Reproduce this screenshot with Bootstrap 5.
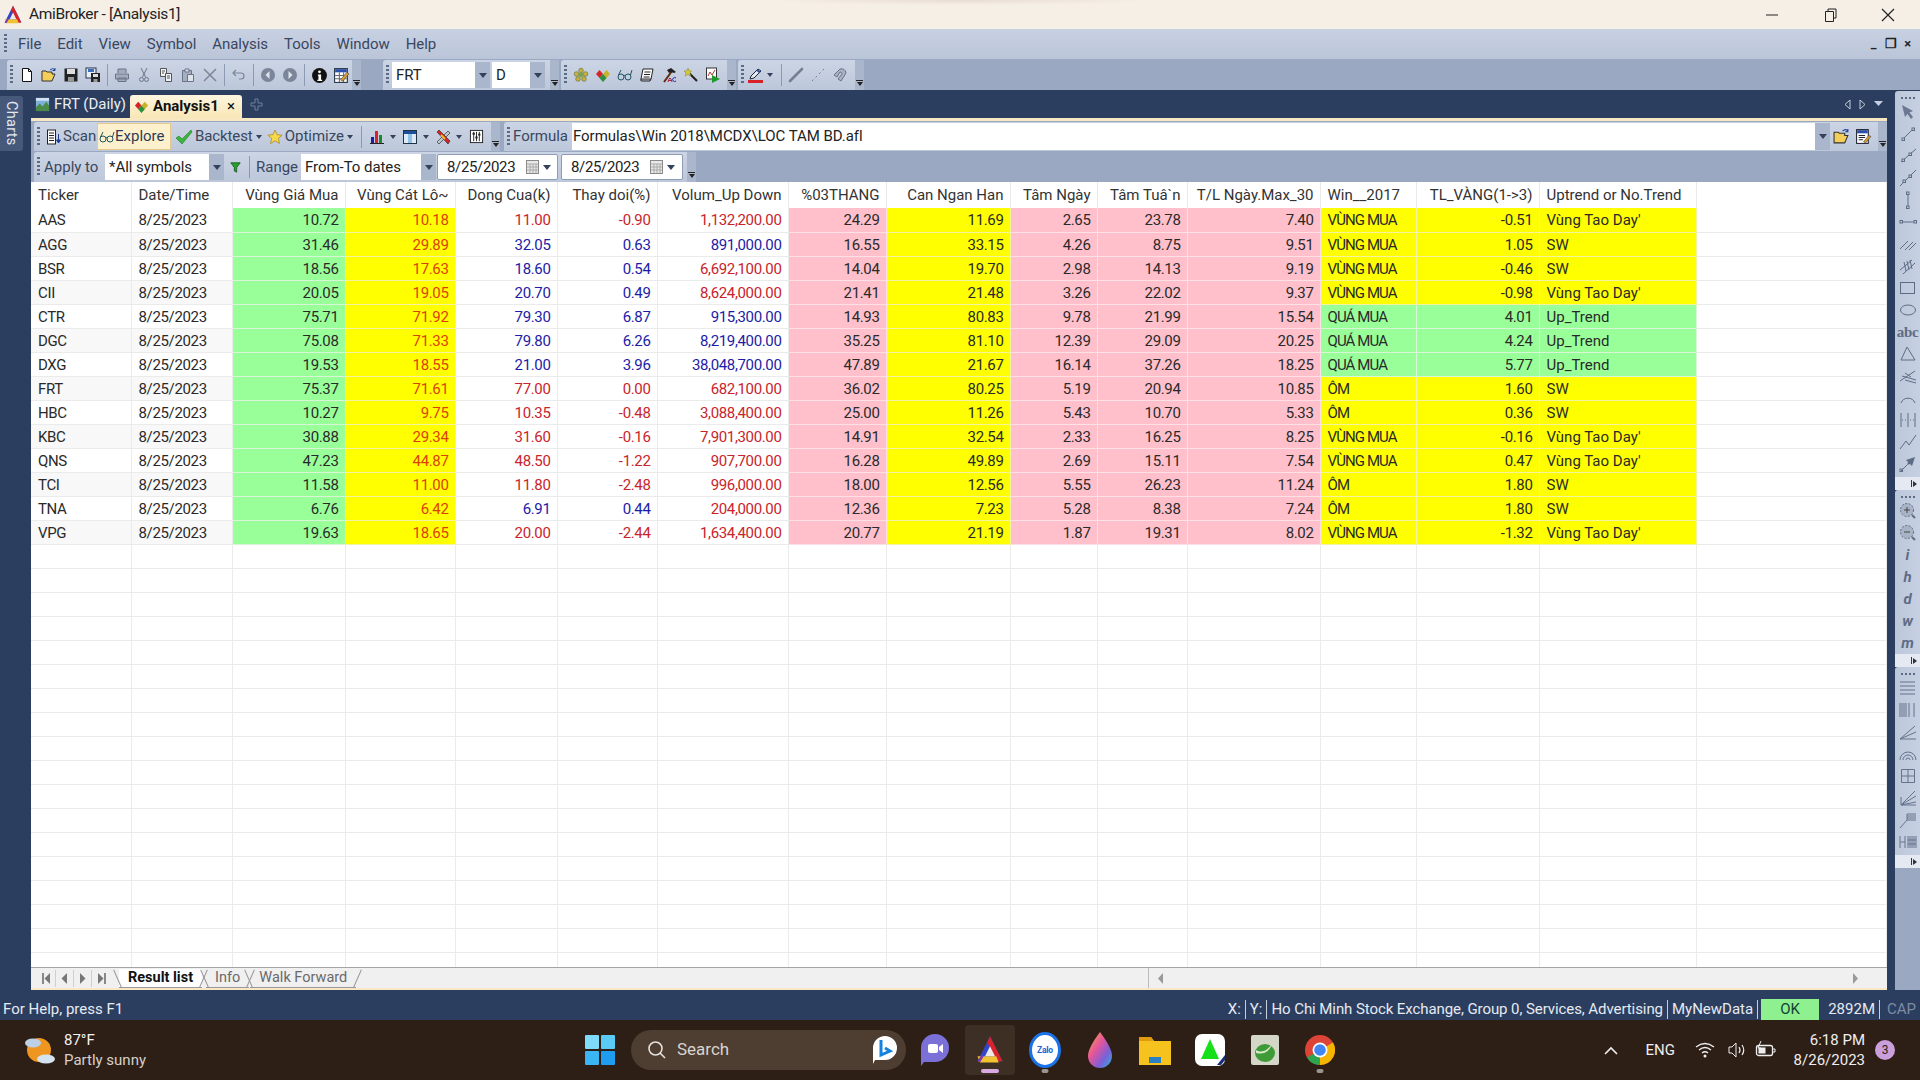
<!DOCTYPE html>
<html lang="en">
<head>
<meta charset="utf-8">
<title>AmiBroker - [Analysis1]</title>
<link href="https://cdn.jsdelivr.net/npm/bootstrap@5.3.0/dist/css/bootstrap.min.css" rel="stylesheet">
<script src="https://cdn.jsdelivr.net/npm/bootstrap@5.3.0/dist/js/bootstrap.bundle.min.js"></script>
<style>
html,body{height:100%}
body{width:1920px;height:1080px;overflow:hidden;background:#2c3e5f;font-family:Roboto,"Liberation Sans",sans-serif;font-size:15px;letter-spacing:-.35px;color:#222}
svg{display:block;flex:none}
.defs{width:0;height:0;position:absolute}
.titlebar{height:29px;background:radial-gradient(ellipse 190px 5px at 960px 0,#e9dcd2 0,#f5efe6 100%) #f5f0e8;flex:none;padding-left:3px}
.title-text{font-size:15.5px;color:#222;margin-left:6px}
.win-btn{width:58px;height:29px}
.win-set{margin-right:3px}
.menubar{height:30px;flex:none;background:linear-gradient(#c8d1e2,#bbc5d9);color:#39475f;padding-left:1px}
.menu-item{padding:0 8px;font-size:15px;letter-spacing:-.05px}
.grip{width:3px;height:20px;margin:0 3px;flex:none;background:repeating-linear-gradient(#5b6a85 0 2px,transparent 2px 4px)}
.mdi{width:17px;font-size:13px;text-align:center;color:#222;font-weight:700}
.toolrow{height:31px;flex:none;background:#9aa8c2;padding:1px 0 0 7px}
.bar{height:30px;background:linear-gradient(#ccd5e5,#bcc7da);border-radius:3px 3px 0 0;position:relative;flex:none}
.w-file{width:352px}
.w-sym{width:176px;margin-left:24px}
.w-ana{width:175px;margin-left:2px}
.w-draw{width:126px;margin-left:2px}
.w-run{width:466px}
.w-range{width:662px}
.slot{width:22px;height:28px;flex:none;display:flex;align-items:center;justify-content:center}
.slot.pull{margin-left:-2px}
.sep{width:1px;height:22px;background:#8c99b2;flex:none;margin:0 3px}
.sep.sep-six{margin:0 6px}
.over{width:9px;align-self:stretch;background:#aab6cc;margin-left:auto;flex:none;display:flex;flex-direction:column;justify-content:flex-end;align-items:center;padding-bottom:4px}
.over i{display:block;width:7px;height:1px;background:#222;margin-bottom:1px}
.over b{display:block;width:0;height:0;border:3px solid transparent;border-top:4px solid #222;border-bottom:0}
.combo{height:26px;background:#fff;display:flex;align-items:center;padding-left:4px;font-size:15px;flex:none;position:relative;color:#222;letter-spacing:-.05px}
.combo .drop{position:absolute;right:0;top:0;bottom:0;width:15px;background:#aab6cc;display:flex;align-items:center;justify-content:center}
.w-frt{width:98px}.w-d{width:53px;margin-left:2px}
.w-apply{width:119px}.w-from{width:135px}
.combo.c-tall{height:27px;padding-left:1px}
.tri{display:block;width:0;height:0;border:4px solid transparent;border-top:5px solid #33415c;border-bottom:0;flex:none}
.tri.sm{border-width:3px;border-top-width:4px;border-bottom-width:0}
.tri.gap{margin:0 6px 0 5px}
.tri.after-label{margin:0 5px 0 3px}
.body-row{height:900px;flex:none}
.side-left{width:31px;flex:none}
.charts-tab{width:23px;height:55px;margin-top:6px;background:#46597a;color:#e4e8f0;border-radius:0 3px 3px 0;writing-mode:vertical-rl;font-size:14.5px;letter-spacing:.3px;text-align:center;line-height:23px}
.center-col{width:1856px;flex:none}
.tabstrip{height:28px;flex:none;color:#e9edf4;font-size:15px;letter-spacing:0}
.doc-tab{margin-top:5px;height:23px;width:112px;background:linear-gradient(#fdf6e0,#f8e6b5);border-radius:3px 3px 0 0;color:#111;font-weight:700;flex:none;font-size:15px}
.ana{flex:1;min-height:0;background:#9aa8c2;border-top:3px solid #f7e7c2;border-bottom:2px solid #f7e7c2;display:flex;flex-direction:column;width:1856px}
.ana-row1{height:30px;flex:none;padding:1px 0 0 3px;gap:4px}
.ana-row2{height:31px;flex:none;padding:1px 0 0 3px}
.ana-row1 .bar{height:29px}
.ana-row2 .bar{height:30px}
.tb-label{color:#39475f;font-size:15px;white-space:nowrap;letter-spacing:0}
.scan-ico{margin-left:3px}
.scan-txt{margin-left:1px;width:34px}
.explore{background:#fdf1cd;border:1px solid #e4c88c;height:27px;width:74px;padding-left:1px;margin-right:4px;color:#2f3b55;flex:none}
.back-txt{margin-left:2px;letter-spacing:-.1px}
.opt-txt{margin-left:2px}
.mix-ico{margin-left:1px}
.apply-box{width:62px;padding-left:1px;flex:none}
.range-box{width:45px;flex:none}
.fn{margin:0 2px 0 6px}
.datebox{height:26px;background:#fff;border:1px solid #8f9cb5;border-radius:2px;padding-left:9px;flex:none;color:#222;font-size:15px}
.d1{width:121px;margin-left:1px}.d2{width:122px;margin-left:3px}
.cal-ico{margin-left:10px;margin-right:2px}
.grid-wrap{flex:1;min-height:0;overflow:hidden;background:#fff}
.quotes{table-layout:fixed;width:1856px;margin:0;font-size:15px}
.quotes>thead>tr>th{height:26px;padding:0 6px 0 7px;font-weight:400;color:#333;border:0;border-right:1px solid #e9e9e9;background:#fff;white-space:nowrap;vertical-align:middle;line-height:1;letter-spacing:0}
.quotes>tbody>tr>td{height:24px;padding:2px 6px 0 7px;border:0;border-right:1px solid #ebebeb;border-bottom:1px solid #ebebeb;color:#2a2a2a;white-space:nowrap;vertical-align:middle;line-height:1;background:#fff}
.quotes>tbody>tr:nth-child(even):nth-child(-n+14)>td:nth-child(-n+2){background:#f8f8f8}
.quotes>tbody>tr>td.cg{background:#99ff99;border-color:#d8f5d8}
.quotes>tbody>tr>td.cy{background:#ffff00;border-color:#f3f3a0}
.quotes>tbody>tr>td.cp{background:#ffc0cb;border-color:#fbe0e5}
.quotes>tbody>tr>td.tr{color:#c9242b;background:#fff}
.quotes>tbody>tr>td.tb{color:#1c1ca6;background:#fff}
.quotes>tbody>tr>td.to{color:#dc3f0a}
.quotes>tbody>tr>td:nth-child(13){letter-spacing:-.9px}
.quotes>tbody>tr>td:nth-child(15){letter-spacing:0}
.cw1{width:100px}.cw2{width:101px}.cw3{width:113px}.cw4{width:110px}.cw5{width:102px}.cw6{width:100px}.cw7{width:131px}.cw8{width:98px}.cw9{width:124px}.cw10{width:87px}.cw11{width:90px}.cw12{width:133px}.cw13{width:96px}.cw14{width:123px}.cw15{width:157px}
.sheetbar{height:21px;flex:none;background:#f0f0f0;border-top:1px solid #a5a5a5;color:#555;font-size:14.5px;padding-left:7px;letter-spacing:0}
.nav-cell{width:18px;height:17px;border-right:1px solid #cfcfcf}
.sheet-tab{padding:0 9px;height:19px;line-height:18px;border-bottom:1px solid #999;position:relative;margin-right:1px;color:#6a6a6a;white-space:nowrap}
.sheet-tab::before,.sheet-tab::after{content:"";position:absolute;top:0;bottom:-1px;width:1px;background:#999}
.sheet-tab::before{left:-2px;transform:rotate(-24deg)}
.sheet-tab::after{right:-2px;transform:rotate(24deg)}
.sheet-tab.on{color:#111;font-weight:700;background:#fff;margin:0 4px 0 9px}
.hscroll{width:739px;padding:0 29px 0 9px;border-left:1px solid #bbb}
.side-right{width:33px;flex:none;padding:1px 0 0 8px}
.rp-group{width:25px;background:linear-gradient(90deg,#bcc7da,#c6d0e2);border-radius:3px 0 0 0;flex:none}
.rp-pad{padding-bottom:2px}
.rp-grip{height:7px;width:14px;margin:3px auto 0;background:repeating-linear-gradient(90deg,#5b6a85 0 2px,transparent 2px 4px) center/100% 2px no-repeat}
.rp-i{height:22px;width:25px;flex:none;display:flex;align-items:center;justify-content:center;color:#5f6c85;font-weight:700;font-style:italic;letter-spacing:0}
.rp-i.abc-text{font-family:"Liberation Serif",serif;font-style:normal;font-size:15px;letter-spacing:-.3px}
.rp-more{height:13px;width:25px;background:#e4e9f2;flex:none;display:flex;align-items:center;justify-content:flex-end;padding-right:3px;gap:1px}
.rp-more i{display:block;width:1px;height:7px;background:#333}
.rp-more b{display:block;width:0;height:0;border:3.5px solid transparent;border-left:4px solid #333;border-right:0}
.rp-rest{flex:1;width:25px;background:#9aa8c2}
.statusbar{height:30px;flex:none;color:#e6eaf1;font-size:15px;letter-spacing:0;padding:9px 0 0 3px}
.st-long{letter-spacing:-.08px}
.st-sep{width:1px;height:19px;background:#c7cedb;flex:none}
.st-sep.wide{margin:0 3px 0 0}
.st-ok{width:58px;height:21px;background:#8ff08f;color:#143;text-align:center;line-height:21px;margin:0 5px 0 -1px;flex:none}
.cap-dim{color:#7f8ba3}
.taskbar{height:60px;flex:none;background:#2e1f16;color:#eee;position:relative}
.wx-ico{margin-left:24px}
.wx-box{width:130px;margin-left:8px;letter-spacing:0}
.weather-a{font-size:15px;line-height:20px;color:#f2f2f2}
.weather-b{font-size:15px;line-height:20px;color:#d5d0cc}
.win-logo{margin-left:391px}
.searchpill{width:275px;height:40px;border-radius:20px;background:#4e3e32;margin-left:16px;flex:none;color:#d8d4d0;font-size:17px;letter-spacing:0}
.search-txt{margin-left:10px}
.applist{margin-left:4px;gap:5px}
.tb-app{width:50px;height:50px;flex:none;position:relative;border-radius:4px;display:flex;align-items:center;justify-content:center}
.tb-app.active{background:#3e2f25}
.pip{position:absolute;left:50%;bottom:2px;width:7px;height:4px;border-radius:2px;background:#9b9490;transform:translateX(-50%)}
.active .pip{width:18px;background:#d9a9e2}
.zalo-disc{width:32px;height:36px;border-radius:50%;background:#fff;border:3px solid #1a73e8}
.zalo-txt{font-size:8.5px;font-weight:700;color:#1766d6;letter-spacing:-.2px;line-height:1}
.tray{color:#eee;font-size:15px}
.eng{margin-left:28px;letter-spacing:0}
.t-wifi{margin-left:20px}
.t-vol{margin-left:13px}
.t-bat{margin-left:6px}
.clock{text-align:right;line-height:20px;font-size:15px;color:#eee;width:90px;flex:none;letter-spacing:0;margin-left:-1px}
.notif{width:20px;height:20px;border-radius:50%;background:#c9a0dc;color:#2e1f16;font-size:12px;text-align:center;line-height:20px;margin:0 25px 0 10px;flex:none}
</style>
</head>
<body class="d-flex flex-column">
<svg class="defs" aria-hidden="true">
<defs>
<symbol id="new" viewBox="0 0 16 16"><path d="M3.5 1.5h6l3 3v10h-9z" fill="#fff" stroke="#111"/><path d="M9.5 1.5v3h3" fill="none" stroke="#111"/></symbol>
<symbol id="open" viewBox="0 0 16 16"><path d="M1 14V4h4l1 1h5v2h3l-3 7z" fill="#f3cf5a" stroke="#333"/><path d="M9 3q3-3 5 0M14 1v2.500h-2.500" fill="none" stroke="#1b3f9a"/></symbol>
<symbol id="save" viewBox="0 0 16 16"><rect x="1.500" y="1.500" width="13" height="13" fill="#222"/><rect x="4" y="2" width="8" height="5" fill="#ddd"/><rect x="5" y="10" width="6" height="4.500" fill="#999"/></symbol>
<symbol id="saveall" viewBox="0 0 16 16"><rect x="1" y="1" width="10" height="10" fill="#e8eef8" stroke="#234"/><rect x="3" y="2" width="6" height="3" fill="#3b6ec0"/><rect x="6" y="6" width="9" height="9" fill="#222"/><rect x="8" y="7" width="5" height="3" fill="#ddd"/><rect x="8.500" y="12" width="4" height="3" fill="#999"/></symbol>
<symbol id="print" viewBox="0 0 16 16"><path d="M4 6V2h8v4M1.500 7h13v5h-13zM4 11h8v3.500H4z" fill="#a3acbd" stroke="#6a7488"/></symbol>
<symbol id="cut" viewBox="0 0 16 16"><path d="M5 1l4.500 9M11 1l-4.500 9" stroke="#6a7488" fill="none"/><circle cx="5.500" cy="12.500" r="2" fill="none" stroke="#6a7488"/><circle cx="10.500" cy="12.500" r="2" fill="none" stroke="#6a7488"/></symbol>
<symbol id="copy" viewBox="0 0 16 16"><path d="M2.500 1.500h6v8h-6z" fill="#eef1f6" stroke="#555"/><path d="M7.500 6.500h6v8h-6z" fill="#eef1f6" stroke="#555"/><path d="M9 9h3M9 11h3M4 4h3M4 6h2" stroke="#555"/></symbol>
<symbol id="paste" viewBox="0 0 16 16"><path d="M2.500 3.500h9v11h-9z" fill="#a6afc0" stroke="#6a7488"/><path d="M5 2h4v3H5z" fill="#dde" stroke="#6a7488"/><path d="M7.500 7.500h6v7h-6z" fill="#dfe3ea" stroke="#6a7488"/></symbol>
<symbol id="xx" viewBox="0 0 16 16"><path d="M2 2l12 12M14 2L2 14" stroke="#7c869a" stroke-width="1.500"/></symbol>
<symbol id="undo" viewBox="0 0 16 16"><path d="M5 3L2 6l3 3M2.500 6H10q3 0 3 3t-3 3H8" fill="none" stroke="#7c869a" stroke-width="1.200"/></symbol>
<symbol id="back" viewBox="0 0 16 16"><circle cx="8" cy="8" r="7" fill="#7c869a"/><path d="M9.500 4L5.500 8l4 4z" fill="#dfe4ec"/></symbol>
<symbol id="fwd" viewBox="0 0 16 16"><circle cx="8" cy="8" r="7" fill="#7c869a"/><path d="M6.500 4l4 4-4 4z" fill="#dfe4ec"/></symbol>
<symbol id="info" viewBox="0 0 16 16"><circle cx="8" cy="8" r="7" fill="#111"/><circle cx="8" cy="4.500" r="1.300" fill="#fff"/><path d="M6.500 7h3v5h1v1.200h-4.500V12h1V8.200h-.5z" fill="#fff"/></symbol>
<symbol id="calg" viewBox="0 0 16 16"><rect x="1.500" y="1.500" width="12" height="13" fill="#fff" stroke="#234"/><rect x="2" y="2" width="11" height="3" fill="#2b4fa8"/><path d="M2 8h11M2 11h11M6 5v9M10 5v9" stroke="#667"/><path d="M7 12l6-7 2 1.500-6 7z" fill="#d8a030" stroke="#333" stroke-width=".5"/></symbol>
<symbol id="flower" viewBox="0 0 16 16"><g fill="#c8b23c" stroke="#5d6b3a" stroke-width=".6"><circle cx="8" cy="3.500" r="2.300"/><circle cx="3.500" cy="7" r="2.300"/><circle cx="12.500" cy="7" r="2.300"/><circle cx="5" cy="12" r="2.300"/><circle cx="11" cy="12" r="2.300"/></g><circle cx="8" cy="8" r="2.300" fill="#7aa24a"/></symbol>
<symbol id="gems" viewBox="0 0 16 16"><path d="M4.500 3L8 7 4.500 11 1 7z" fill="#d8222a"/><path d="M11.500 3L15 7l-3.500 4L8 7z" fill="#c7b22a"/><path d="M8 7l3.500 4L8 15l-3.500-4z" fill="#2c8f3a"/></symbol>
<symbol id="glass" viewBox="0 0 16 16"><circle cx="4" cy="10" r="3" fill="none" stroke="#1e5560"/><circle cx="11" cy="10" r="3" fill="none" stroke="#1e5560"/><path d="M7 9q.5-1 1 0M1.500 8L4 3M13.500 8L15 3" fill="none" stroke="#1e5560"/></symbol>
<symbol id="book" viewBox="0 0 16 16"><path d="M4 2h10l-2 10H2z" fill="#fff" stroke="#222"/><path d="M2 12q-1 2 1 2h8l1-2M5.500 5h6M5 7.500h6M4.500 10h6" fill="none" stroke="#222"/></symbol>
<symbol id="hammer" viewBox="0 0 16 16"><path d="M3 15L11 4" stroke="#5a2c12" stroke-width="2"/><path d="M6 3l4-2 5 4-2 1-3-1-2 1z" fill="#222"/><path d="M7 15q1-4 2-4t2 4M8 13.500h2" stroke="#b0223a" fill="none"/><path d="M15 11a2 2 0 1 0 0 3" stroke="#22a" fill="none"/></symbol>
<symbol id="wand" viewBox="0 0 16 16"><path d="M6 6l8 8" stroke="#222" stroke-width="2.200"/><path d="M5 1l1 2.500 2.500.5L7 6l.5 3L5 7.500 2 9l1-3-2-2 3-.5z" fill="#d8c43a" stroke="#7c8a3a" stroke-width=".5"/></symbol>
<symbol id="playchart" viewBox="0 0 16 16"><rect x="1.500" y="1" width="10" height="11" fill="#fff" stroke="#333"/><path d="M3 9l2-4 2 3 3-5" stroke="#a33" fill="none"/><path d="M7 8l8 4-8 4z" fill="#1c9a2a"/></symbol>
<symbol id="pen" viewBox="0 0 16 16"><path d="M3 9l7-7 3 2-7 7-4 1z" fill="#e4e8f0" stroke="#223"/><path d="M9 3l3 2.500" stroke="#2b4fa8" stroke-width="2"/><rect x="0" y="13" width="15" height="3" fill="#d8222a"/></symbol>
<symbol id="slash" viewBox="0 0 16 16"><path d="M2 14L14 2" stroke="#767f92" stroke-width="2.600" stroke-linecap="round"/></symbol>
<symbol id="dots" viewBox="0 0 16 16"><path d="M2 14L14 2" stroke="#767f92" stroke-dasharray="2 3"/></symbol>
<symbol id="magnet" viewBox="0 0 16 16"><path d="M2 8l6-6q5-1 6 4l-5 8-3-2 4-5q0-2-2-2L5 10z" fill="#a9b2c3" stroke="#6a7488"/></symbol>
<symbol id="scan" viewBox="0 0 16 16"><rect x="1.500" y="1" width="8" height="14" fill="#fff" stroke="#222"/><path d="M3 4h5M3 6.500h5M3 9h5M3 11.500h5" stroke="#222"/><path d="M12.500 5v8M10.500 11l2 3 2-3z" stroke="#1b3f9a" fill="#1b3f9a"/></symbol>
<symbol id="check" viewBox="0 0 18 16"><path d="M1 9l3-2 3 3 9-9 1 2L7 15z" fill="#3cb53c" stroke="#1e7a2e" stroke-width=".6"/></symbol>
<symbol id="star" viewBox="0 0 16 16"><path d="M8 1l2.100 4.700 5 .5-3.800 3.300 1.200 5L8 11.800 3.500 14.500l1.200-5L.900 6.200l5-.5z" fill="#f8d84a" stroke="#a98a2a" stroke-width=".8"/></symbol>
<symbol id="bars" viewBox="0 0 16 16"><rect x="2" y="8" width="3" height="6" fill="#1c1ca6"/><rect x="6" y="2" width="3" height="12" fill="#d8222a"/><rect x="10" y="6" width="3" height="8" fill="#1c8a2a"/><path d="M1 14.500h14" stroke="#222"/></symbol>
<symbol id="winlay" viewBox="0 0 16 16"><rect x="1.500" y="1.500" width="13" height="13" fill="#dfeaf8" stroke="#234"/><rect x="2" y="2" width="12" height="3" fill="#1b4f9a"/><rect x="6" y="5" width="4" height="9" fill="#8fc2e8"/></symbol>
<symbol id="tools" viewBox="0 0 16 16"><path d="M2 13L13 2l2 2L4 15z" fill="#c0c6d0" stroke="#333" stroke-width=".7"/><path d="M2 3l2-2 11 11-2 3z" fill="#d8222a" stroke="#333" stroke-width=".7"/><path d="M6 6l4 4" stroke="#e8c030" stroke-width="2"/></symbol>
<symbol id="mixer" viewBox="0 0 16 16"><rect x="1.500" y="1.500" width="13" height="13" fill="#fff" stroke="#222"/><path d="M5 3v10M8 3v10M11 3v10" stroke="#222"/><path d="M3.800 5h2.400M6.800 9h2.400M9.800 6h2.400" stroke="#222" stroke-width="2"/></symbol>
<symbol id="funnel" viewBox="0 0 14 14"><path d="M1 1h12L8.500 7v6l-3-1.500V7z" fill="#27a02f" stroke="#14561a"/></symbol>
<symbol id="calbtn" viewBox="0 0 16 16"><rect x="1.500" y="1.500" width="12" height="13" fill="#e8e8e8" stroke="#8a8a8a"/><path d="M2 5h11M2 8h11M2 11h11M5 5v9M8 5v9M11 5v9" stroke="#aaa"/></symbol>
<symbol id="edit" viewBox="0 0 16 16"><rect x="1.500" y="1.500" width="11" height="13" fill="#fff" stroke="#223"/><rect x="2" y="2" width="10" height="3" fill="#2b4fa8"/><path d="M3.500 7h6M3.500 9h6M3.500 11h4" stroke="#223"/><path d="M8 13l5-6 2 1-5 6z" fill="#d8a030" stroke="#333" stroke-width=".5"/></symbol>
<symbol id="chartpic" viewBox="0 0 16 16"><rect x="1" y="1" width="14" height="14" fill="#7fb0d8"/><path d="M1 11l4-4 3 3 4-5 3 4v6H1z" fill="#4c8a48"/><path d="M1 1h14v3H1z" fill="#cfe2f3"/></symbol>
<symbol id="l-arrow" viewBox="0 0 18 18"><path d="M3 2l11 6-3.500 1.500L14 14l-2 2-3.500-5L6 14z" fill="#6b788f"/></symbol>
<symbol id="l-seg" viewBox="0 0 18 18"><path d="M5 13L13 5" stroke="#5f6c85"/><rect x="3" y="13" width="2.500" height="2.500" fill="none" stroke="#5f6c85"/><rect x="13" y="3" width="2.500" height="2.500" fill="none" stroke="#5f6c85"/></symbol>
<symbol id="l-ray" viewBox="0 0 18 18"><path d="M2 15L17 2" stroke="#5f6c85"/><rect x="3" y="12" width="2.500" height="2.500" fill="#bcc7da" stroke="#5f6c85"/><rect x="10" y="6" width="2.500" height="2.500" fill="#bcc7da" stroke="#5f6c85"/></symbol>
<symbol id="l-ext" viewBox="0 0 18 18"><path d="M1 17L17 1" stroke="#5f6c85"/><rect x="4" y="11" width="2.500" height="2.500" fill="#bcc7da" stroke="#5f6c85"/><rect x="10" y="6" width="2.500" height="2.500" fill="#bcc7da" stroke="#5f6c85"/></symbol>
<symbol id="l-v" viewBox="0 0 18 18"><path d="M9 3v12" stroke="#5f6c85"/><rect x="7.500" y="1" width="2.500" height="2.500" fill="none" stroke="#5f6c85"/><rect x="7.500" y="15" width="2.500" height="2.500" fill="none" stroke="#5f6c85"/></symbol>
<symbol id="l-h" viewBox="0 0 18 18"><path d="M3 9h12" stroke="#5f6c85"/><rect x="1" y="7.500" width="2.500" height="2.500" fill="none" stroke="#5f6c85"/><rect x="15" y="7.500" width="2.500" height="2.500" fill="none" stroke="#5f6c85"/></symbol>
<symbol id="l-par" viewBox="0 0 18 18"><path d="M1 14L9 6M6 15l8-8M10 15l7-7" stroke="#5f6c85" fill="none"/></symbol>
<symbol id="l-hatch" viewBox="0 0 18 18"><path d="M1 13L13 3M4 17L16 6M5 5l2 9M8 4l2 9M11 3l2 9" stroke="#5f6c85" fill="none"/></symbol>
<symbol id="l-rect" viewBox="0 0 18 18"><rect x="1.500" y="3.500" width="14" height="11" fill="none" stroke="#5f6c85"/></symbol>
<symbol id="l-ell" viewBox="0 0 18 18"><ellipse cx="9" cy="9" rx="7.500" ry="5" fill="none" stroke="#5f6c85"/></symbol>
<symbol id="l-tri" viewBox="0 0 18 18"><path d="M8 2l8 13H2z" fill="none" stroke="#5f6c85"/></symbol>
<symbol id="l-fan" viewBox="0 0 18 18"><path d="M1 14L16 4M3 9l14 4M6 13l11 3M6 6l6 4" stroke="#5f6c85" fill="none"/></symbol>
<symbol id="l-arc" viewBox="0 0 18 18"><path d="M2 14a7.500 7.500 0 0 1 14 0" fill="none" stroke="#5f6c85"/></symbol>
<symbol id="l-cyc" viewBox="0 0 18 18"><path d="M2 2v14M9 2v14M16 2v14M3 9h1M6 9h1M11 9h1M14 9h1" stroke="#5f6c85"/></symbol>
<symbol id="l-zig" viewBox="0 0 18 18"><path d="M1 16L7 8l3 4L17 2" fill="none" stroke="#5f6c85"/></symbol>
<symbol id="l-pin" viewBox="0 0 18 18"><path d="M2 16l6-6" stroke="#5f6c85"/><rect x="1" y="14" width="2.500" height="2.500" fill="none" stroke="#5f6c85"/><path d="M16 2l-3 9-2-2-3 1 1-3-2-2z" fill="#5f6c85"/></symbol>
<symbol id="l-plus" viewBox="0 0 18 18"><circle cx="8" cy="8" r="6.500" fill="#a9b3c6" stroke="#5f6c85" stroke-dasharray="2 1.500"/><path d="M5 8h6M8 5v6" stroke="#444"/><path d="M13 13l3 3" stroke="#5f6c85" stroke-width="2"/></symbol>
<symbol id="l-minus" viewBox="0 0 18 18"><circle cx="8" cy="8" r="6.500" fill="#a9b3c6" stroke="#5f6c85" stroke-dasharray="2 1.500"/><path d="M5 8h6" stroke="#444"/><path d="M13 13l3 3" stroke="#5f6c85" stroke-width="2"/></symbol>
<symbol id="g-hor" viewBox="0 0 18 18"><path d="M1 3h15M1 7h15M1 11h15M1 15h15" stroke="#66738c"/></symbol>
<symbol id="g-ver" viewBox="0 0 18 18"><path d="M1 2v14M3 2v14M5 2v14M7 2v14M10 2v14M15 2v14" stroke="#66738c"/></symbol>
<symbol id="g-ang" viewBox="0 0 18 18"><path d="M1 16L16 3M1 16L17 9M1 16h16" stroke="#66738c"/></symbol>
<symbol id="g-arcs" viewBox="0 0 18 18"><path d="M1 15a8 8 0 0 1 16 0M4 15a5 5 0 0 1 10 0M7 15a2 2 0 0 1 4 0" fill="none" stroke="#66738c"/></symbol>
<symbol id="g-grid" viewBox="0 0 18 18"><path d="M2.500 2.500h13v13h-13zM2.500 9h13M9 2.500v13" fill="none" stroke="#66738c"/></symbol>
<symbol id="g-fan" viewBox="0 0 18 18"><path d="M2 16L16 2M2 16L17 7M2 16l15-3M2 16h15M2 8v8" stroke="#66738c" fill="none"/></symbol>
<symbol id="g-com" viewBox="0 0 18 18"><path d="M1 17L8 9M8 3h9M8 5h9M8 7h9M8 9h9M8 3v6" stroke="#66738c" fill="none"/></symbol>
<symbol id="g-hh" viewBox="0 0 18 18"><path d="M1 3v12M6 3v12M1 9h5M9 3v12M11 3v12M13 3v12M15 3v12M17 3v12M9 7h8M9 11h8" stroke="#66738c" fill="none"/></symbol>
<symbol id="ami" viewBox="0 0 24 24"><path d="M12 1L2 21h20z" fill="#3345c8"/><path d="M12 1l10 20h-5L10 6z" fill="#d8232a"/><path d="M2 17h15l2 5H4z" fill="#f1c232"/><path d="M12 9l4 8H8z" fill="#f0e8e8"/><path d="M4 22l-2-1 3-5 2 1z" fill="#7a3ab0"/></symbol>
<linearGradient id="dr" x1="0" x2="1" y1="0" y2="1"><stop offset="0" stop-color="#f4b13c"/><stop offset=".4" stop-color="#e6559a"/><stop offset=".7" stop-color="#7c5fd8"/><stop offset="1" stop-color="#27b6d8"/></linearGradient>
</defs>
</svg>

<div class="titlebar d-flex align-items-center">
  <svg width="20" height="20"><use href="#ami"/></svg>
  <span class="title-text">AmiBroker - [Analysis1]</span>
  <div class="ms-auto d-flex win-set">
    <div class="win-btn d-flex align-items-center justify-content-center"><svg width="12" height="2"><path d="M0 1h12" stroke="#222"/></svg></div>
    <div class="win-btn d-flex align-items-center justify-content-center"><svg width="13" height="14"><path d="M1.500 3.500h8v10h-8zM4 3V1h8v9h-2" fill="none" stroke="#222"/></svg></div>
    <div class="win-btn d-flex align-items-center justify-content-center"><svg width="14" height="14"><path d="M1 1l12 12M13 1L1 13" stroke="#222" stroke-width="1.200"/></svg></div>
  </div>
</div>

<div class="menubar d-flex align-items-center">
  <span class="grip"></span>
  <span class="menu-item">File</span><span class="menu-item">Edit</span><span class="menu-item">View</span><span class="menu-item">Symbol</span><span class="menu-item">Analysis</span><span class="menu-item">Tools</span><span class="menu-item">Window</span><span class="menu-item">Help</span>
  <div class="ms-auto d-flex me-1"><span class="mdi">_</span><span class="mdi">❐</span><span class="mdi">×</span></div>
</div>

<div class="toolrow d-flex align-items-start">
  <div class="bar w-file d-flex align-items-center">
    <span class="grip"></span>
    <span class="slot"><svg width="16" height="16"><use href="#new"/></svg></span>
    <span class="slot"><svg width="16" height="16"><use href="#open"/></svg></span>
    <span class="slot"><svg width="16" height="16"><use href="#save"/></svg></span>
    <span class="slot"><svg width="16" height="16"><use href="#saveall"/></svg></span>
    <span class="sep"></span>
    <span class="slot"><svg width="16" height="16"><use href="#print"/></svg></span>
    <span class="slot"><svg width="16" height="16"><use href="#cut"/></svg></span>
    <span class="slot"><svg width="16" height="16"><use href="#copy"/></svg></span>
    <span class="slot"><svg width="16" height="16"><use href="#paste"/></svg></span>
    <span class="slot"><svg width="16" height="16"><use href="#xx"/></svg></span>
    <span class="sep"></span>
    <span class="slot"><svg width="16" height="16"><use href="#undo"/></svg></span>
    <span class="sep"></span>
    <span class="slot"><svg width="16" height="16"><use href="#back"/></svg></span>
    <span class="slot"><svg width="16" height="16"><use href="#fwd"/></svg></span>
    <span class="sep"></span>
    <span class="slot"><svg width="17" height="17"><use href="#info"/></svg></span>
    <span class="slot"><svg width="17" height="17"><use href="#calg"/></svg></span>
    <span class="over"><i></i><b></b></span>
  </div>
  <div class="bar w-sym d-flex align-items-center">
    <span class="grip"></span>
    <div class="combo w-frt">FRT<span class="drop"><span class="tri"></span></span></div>
    <div class="combo w-d">D<span class="drop"><span class="tri"></span></span></div>
    <span class="over"><i></i><b></b></span>
  </div>
  <div class="bar w-ana d-flex align-items-center">
    <span class="grip"></span>
    <span class="slot"><svg width="16" height="16"><use href="#flower"/></svg></span>
    <span class="slot"><svg width="16" height="16"><use href="#gems"/></svg></span>
    <span class="slot"><svg width="16" height="16"><use href="#glass"/></svg></span>
    <span class="slot"><svg width="16" height="16"><use href="#book"/></svg></span>
    <span class="slot"><svg width="16" height="16"><use href="#hammer"/></svg></span>
    <span class="slot"><svg width="16" height="16"><use href="#wand"/></svg></span>
    <span class="slot"><svg width="16" height="16"><use href="#playchart"/></svg></span>
    <span class="over"><i></i><b></b></span>
  </div>
  <div class="bar w-draw d-flex align-items-center">
    <span class="grip"></span>
    <span class="slot pull"><svg width="16" height="16"><use href="#pen"/></svg></span>
    <span class="tri sm"></span>
    <span class="sep ms-2"></span>
    <span class="slot"><svg width="16" height="16"><use href="#slash"/></svg></span>
    <span class="slot"><svg width="16" height="16"><use href="#dots"/></svg></span>
    <span class="slot"><svg width="16" height="16"><use href="#magnet"/></svg></span>
    <span class="over"><i></i><b></b></span>
  </div>
</div>

<div class="body-row d-flex">
  <div class="side-left"><div class="charts-tab">Charts</div></div>
  <div class="center-col d-flex flex-column">
    <div class="tabstrip d-flex align-items-center">
      <svg class="ms-1 me-1" width="15" height="15"><use href="#chartpic"/></svg>
      <span>FRT (Daily)</span>
      <div class="doc-tab d-flex align-items-center ps-1 gap-1 ms-1">
        <svg width="15" height="15"><use href="#gems"/></svg><span>Analysis1</span><span class="ms-1 fw-normal">×</span>
      </div>
      <svg class="ms-2" width="13" height="13"><path d="M5 1h3v4h4v3H8v4H5V8H1V5h4z" fill="none" stroke="#6f7e9a"/></svg>
      <div class="ms-auto d-flex align-items-center gap-2 me-1">
        <svg width="7" height="11"><path d="M6 1v9L1 5.500z" fill="none" stroke="#c5cede"/></svg>
        <svg width="7" height="11"><path d="M1 1v9l5-4.500z" fill="none" stroke="#c5cede"/></svg>
        <svg width="9" height="6"><path d="M0 0h9L4.500 5z" fill="#c5cede"/></svg>
      </div>
    </div>
    <div class="ana">
      <div class="ana-row1 d-flex">
        <div class="bar w-run d-flex align-items-center">
          <span class="grip"></span>
          <svg class="scan-ico" width="16" height="16"><use href="#scan"/></svg>
          <span class="tb-label scan-txt">Scan</span>
          <span class="tb-label explore d-flex align-items-center"><svg width="16" height="16"><use href="#glass"/></svg>Explore</span>
          <svg width="18" height="16"><use href="#check"/></svg>
          <span class="tb-label back-txt">Backtest</span><span class="tri sm after-label"></span>
          <svg width="16" height="16"><use href="#star"/></svg>
          <span class="tb-label opt-txt">Optimize</span><span class="tri sm after-label"></span>
          <span class="sep"></span>
          <svg class="ms-1" width="16" height="16"><use href="#bars"/></svg><span class="tri sm gap"></span>
          <svg width="16" height="16"><use href="#winlay"/></svg><span class="tri sm gap"></span>
          <svg width="16" height="16"><use href="#tools"/></svg><span class="tri sm gap"></span>
          <svg class="mix-ico" width="15" height="15"><use href="#mixer"/></svg>
          <span class="over"><i></i><b></b></span>
        </div>
        <div class="bar d-flex align-items-center flex-grow-1">
          <span class="grip"></span>
          <span class="tb-label me-1">Formula</span>
          <div class="combo c-tall flex-grow-1">Formulas\Win 2018\MCDX\LOC TAM BD.afl<span class="drop"><span class="tri"></span></span></div>
          <span class="slot"><svg width="17" height="17"><use href="#open"/></svg></span>
          <span class="slot"><svg width="17" height="17"><use href="#edit"/></svg></span>
          <span class="over ms-1"><i></i><b></b></span>
        </div>
      </div>
      <div class="ana-row2 d-flex">
        <div class="bar w-range d-flex align-items-center">
          <span class="grip"></span>
          <span class="tb-label apply-box">Apply to</span>
          <div class="combo w-apply">*All symbols<span class="drop"><span class="tri"></span></span></div>
          <svg class="fn" width="11" height="13"><use href="#funnel"/></svg>
          <span class="sep sep-six"></span>
          <span class="tb-label range-box">Range</span>
          <div class="combo w-from">From-To dates<span class="drop"><span class="tri"></span></span></div>
          <div class="datebox d1 d-flex align-items-center">8/25/2023<svg class="cal-ico" width="16" height="16"><use href="#calbtn"/></svg><span class="tri"></span></div>
          <div class="datebox d2 d-flex align-items-center">8/25/2023<svg class="cal-ico" width="16" height="16"><use href="#calbtn"/></svg><span class="tri"></span></div>
          <span class="over"><i></i><b></b></span>
        </div>
      </div>
      <div class="grid-wrap">
        <table class="table quotes">
          <colgroup><col class="cw1"><col class="cw2"><col class="cw3"><col class="cw4"><col class="cw5"><col class="cw6"><col class="cw7"><col class="cw8"><col class="cw9"><col class="cw10"><col class="cw11"><col class="cw12"><col class="cw13"><col class="cw14"><col class="cw15"><col></colgroup>
          <thead><tr><th>Ticker</th><th>Date/Time</th><th class="text-end">Vùng Giá Mua</th><th class="text-end">Vùng Cát Lô~</th><th class="text-end">Dong Cua(k)</th><th class="text-end">Thay doi(%)</th><th class="text-end">Volum_Up Down</th><th class="text-end">%03THANG</th><th class="text-end">Can Ngan Han</th><th class="text-end">Tâm Ngày</th><th class="text-end">Tâm Tuâ`n</th><th class="text-end">T/L Ngày.Max_30</th><th>Win__2017</th><th class="text-end">TL_VÀNG(1-&gt;3)</th><th>Uptrend or No.Trend</th><th></th></tr></thead>
          <tbody>
<tr><td>AAS</td><td>8/25/2023</td><td class="cg text-end">10.72</td><td class="cy to text-end">10.18</td><td class="tr text-end">11.00</td><td class="tr text-end">-0.90</td><td class="tr text-end">1,132,200.00</td><td class="cp text-end">24.29</td><td class="cy text-end">11.69</td><td class="cp text-end">2.65</td><td class="cp text-end">23.78</td><td class="cp text-end">7.40</td><td class="cy">VÙNG MUA</td><td class="cy text-end">-0.51</td><td class="cy">Vùng Tao Day'</td><td></td></tr>
<tr><td>AGG</td><td>8/25/2023</td><td class="cg text-end">31.46</td><td class="cy to text-end">29.89</td><td class="tb text-end">32.05</td><td class="tb text-end">0.63</td><td class="tb text-end">891,000.00</td><td class="cp text-end">16.55</td><td class="cy text-end">33.15</td><td class="cp text-end">4.26</td><td class="cp text-end">8.75</td><td class="cp text-end">9.51</td><td class="cy">VÙNG MUA</td><td class="cy text-end">1.05</td><td class="cy">SW</td><td></td></tr>
<tr><td>BSR</td><td>8/25/2023</td><td class="cg text-end">18.56</td><td class="cy to text-end">17.63</td><td class="tb text-end">18.60</td><td class="tb text-end">0.54</td><td class="tr text-end">6,692,100.00</td><td class="cp text-end">14.04</td><td class="cy text-end">19.70</td><td class="cp text-end">2.98</td><td class="cp text-end">14.13</td><td class="cp text-end">9.19</td><td class="cy">VÙNG MUA</td><td class="cy text-end">-0.46</td><td class="cy">SW</td><td></td></tr>
<tr><td>CII</td><td>8/25/2023</td><td class="cg text-end">20.05</td><td class="cy to text-end">19.05</td><td class="tb text-end">20.70</td><td class="tb text-end">0.49</td><td class="tr text-end">8,624,000.00</td><td class="cp text-end">21.41</td><td class="cy text-end">21.48</td><td class="cp text-end">3.26</td><td class="cp text-end">22.02</td><td class="cp text-end">9.37</td><td class="cy">VÙNG MUA</td><td class="cy text-end">-0.98</td><td class="cy">Vùng Tao Day'</td><td></td></tr>
<tr><td>CTR</td><td>8/25/2023</td><td class="cg text-end">75.71</td><td class="cy to text-end">71.92</td><td class="tb text-end">79.30</td><td class="tb text-end">6.87</td><td class="tb text-end">915,300.00</td><td class="cp text-end">14.93</td><td class="cy text-end">80.83</td><td class="cp text-end">9.78</td><td class="cp text-end">21.99</td><td class="cp text-end">15.54</td><td class="cg">QUÁ MUA</td><td class="cg text-end">4.01</td><td class="cg">Up_Trend</td><td></td></tr>
<tr><td>DGC</td><td>8/25/2023</td><td class="cg text-end">75.08</td><td class="cy to text-end">71.33</td><td class="tb text-end">79.80</td><td class="tb text-end">6.26</td><td class="tb text-end">8,219,400.00</td><td class="cp text-end">35.25</td><td class="cy text-end">81.10</td><td class="cp text-end">12.39</td><td class="cp text-end">29.09</td><td class="cp text-end">20.25</td><td class="cg">QUÁ MUA</td><td class="cg text-end">4.24</td><td class="cg">Up_Trend</td><td></td></tr>
<tr><td>DXG</td><td>8/25/2023</td><td class="cg text-end">19.53</td><td class="cy to text-end">18.55</td><td class="tb text-end">21.00</td><td class="tb text-end">3.96</td><td class="tb text-end">38,048,700.00</td><td class="cp text-end">47.89</td><td class="cy text-end">21.67</td><td class="cp text-end">16.14</td><td class="cp text-end">37.26</td><td class="cp text-end">18.25</td><td class="cg">QUÁ MUA</td><td class="cg text-end">5.77</td><td class="cg">Up_Trend</td><td></td></tr>
<tr><td>FRT</td><td>8/25/2023</td><td class="cg text-end">75.37</td><td class="cy to text-end">71.61</td><td class="tr text-end">77.00</td><td class="tr text-end">0.00</td><td class="tr text-end">682,100.00</td><td class="cp text-end">36.02</td><td class="cy text-end">80.25</td><td class="cp text-end">5.19</td><td class="cp text-end">20.94</td><td class="cp text-end">10.85</td><td class="cy">ÔM</td><td class="cy text-end">1.60</td><td class="cy">SW</td><td></td></tr>
<tr><td>HBC</td><td>8/25/2023</td><td class="cg text-end">10.27</td><td class="cy to text-end">9.75</td><td class="tr text-end">10.35</td><td class="tr text-end">-0.48</td><td class="tr text-end">3,088,400.00</td><td class="cp text-end">25.00</td><td class="cy text-end">11.26</td><td class="cp text-end">5.43</td><td class="cp text-end">10.70</td><td class="cp text-end">5.33</td><td class="cy">ÔM</td><td class="cy text-end">0.36</td><td class="cy">SW</td><td></td></tr>
<tr><td>KBC</td><td>8/25/2023</td><td class="cg text-end">30.88</td><td class="cy to text-end">29.34</td><td class="tr text-end">31.60</td><td class="tr text-end">-0.16</td><td class="tr text-end">7,901,300.00</td><td class="cp text-end">14.91</td><td class="cy text-end">32.54</td><td class="cp text-end">2.33</td><td class="cp text-end">16.25</td><td class="cp text-end">8.25</td><td class="cy">VÙNG MUA</td><td class="cy text-end">-0.16</td><td class="cy">Vùng Tao Day'</td><td></td></tr>
<tr><td>QNS</td><td>8/25/2023</td><td class="cg text-end">47.23</td><td class="cy to text-end">44.87</td><td class="tr text-end">48.50</td><td class="tr text-end">-1.22</td><td class="tr text-end">907,700.00</td><td class="cp text-end">16.28</td><td class="cy text-end">49.89</td><td class="cp text-end">2.69</td><td class="cp text-end">15.11</td><td class="cp text-end">7.54</td><td class="cy">VÙNG MUA</td><td class="cy text-end">0.47</td><td class="cy">Vùng Tao Day'</td><td></td></tr>
<tr><td>TCI</td><td>8/25/2023</td><td class="cg text-end">11.58</td><td class="cy to text-end">11.00</td><td class="tr text-end">11.80</td><td class="tr text-end">-2.48</td><td class="tr text-end">996,000.00</td><td class="cp text-end">18.00</td><td class="cy text-end">12.56</td><td class="cp text-end">5.55</td><td class="cp text-end">26.23</td><td class="cp text-end">11.24</td><td class="cy">ÔM</td><td class="cy text-end">1.80</td><td class="cy">SW</td><td></td></tr>
<tr><td>TNA</td><td>8/25/2023</td><td class="cg text-end">6.76</td><td class="cy to text-end">6.42</td><td class="tb text-end">6.91</td><td class="tb text-end">0.44</td><td class="tr text-end">204,000.00</td><td class="cp text-end">12.36</td><td class="cy text-end">7.23</td><td class="cp text-end">5.28</td><td class="cp text-end">8.38</td><td class="cp text-end">7.24</td><td class="cy">ÔM</td><td class="cy text-end">1.80</td><td class="cy">SW</td><td></td></tr>
<tr><td>VPG</td><td>8/25/2023</td><td class="cg text-end">19.63</td><td class="cy to text-end">18.65</td><td class="tr text-end">20.00</td><td class="tr text-end">-2.44</td><td class="tr text-end">1,634,400.00</td><td class="cp text-end">20.77</td><td class="cy text-end">21.19</td><td class="cp text-end">1.87</td><td class="cp text-end">19.31</td><td class="cp text-end">8.02</td><td class="cy">VÙNG MUA</td><td class="cy text-end">-1.32</td><td class="cy">Vùng Tao Day'</td><td></td></tr>
<tr><td></td><td></td><td></td><td></td><td></td><td></td><td></td><td></td><td></td><td></td><td></td><td></td><td></td><td></td><td></td><td></td></tr>
<tr><td></td><td></td><td></td><td></td><td></td><td></td><td></td><td></td><td></td><td></td><td></td><td></td><td></td><td></td><td></td><td></td></tr>
<tr><td></td><td></td><td></td><td></td><td></td><td></td><td></td><td></td><td></td><td></td><td></td><td></td><td></td><td></td><td></td><td></td></tr>
<tr><td></td><td></td><td></td><td></td><td></td><td></td><td></td><td></td><td></td><td></td><td></td><td></td><td></td><td></td><td></td><td></td></tr>
<tr><td></td><td></td><td></td><td></td><td></td><td></td><td></td><td></td><td></td><td></td><td></td><td></td><td></td><td></td><td></td><td></td></tr>
<tr><td></td><td></td><td></td><td></td><td></td><td></td><td></td><td></td><td></td><td></td><td></td><td></td><td></td><td></td><td></td><td></td></tr>
<tr><td></td><td></td><td></td><td></td><td></td><td></td><td></td><td></td><td></td><td></td><td></td><td></td><td></td><td></td><td></td><td></td></tr>
<tr><td></td><td></td><td></td><td></td><td></td><td></td><td></td><td></td><td></td><td></td><td></td><td></td><td></td><td></td><td></td><td></td></tr>
<tr><td></td><td></td><td></td><td></td><td></td><td></td><td></td><td></td><td></td><td></td><td></td><td></td><td></td><td></td><td></td><td></td></tr>
<tr><td></td><td></td><td></td><td></td><td></td><td></td><td></td><td></td><td></td><td></td><td></td><td></td><td></td><td></td><td></td><td></td></tr>
<tr><td></td><td></td><td></td><td></td><td></td><td></td><td></td><td></td><td></td><td></td><td></td><td></td><td></td><td></td><td></td><td></td></tr>
<tr><td></td><td></td><td></td><td></td><td></td><td></td><td></td><td></td><td></td><td></td><td></td><td></td><td></td><td></td><td></td><td></td></tr>
<tr><td></td><td></td><td></td><td></td><td></td><td></td><td></td><td></td><td></td><td></td><td></td><td></td><td></td><td></td><td></td><td></td></tr>
<tr><td></td><td></td><td></td><td></td><td></td><td></td><td></td><td></td><td></td><td></td><td></td><td></td><td></td><td></td><td></td><td></td></tr>
<tr><td></td><td></td><td></td><td></td><td></td><td></td><td></td><td></td><td></td><td></td><td></td><td></td><td></td><td></td><td></td><td></td></tr>
<tr><td></td><td></td><td></td><td></td><td></td><td></td><td></td><td></td><td></td><td></td><td></td><td></td><td></td><td></td><td></td><td></td></tr>
<tr><td></td><td></td><td></td><td></td><td></td><td></td><td></td><td></td><td></td><td></td><td></td><td></td><td></td><td></td><td></td><td></td></tr>
<tr><td></td><td></td><td></td><td></td><td></td><td></td><td></td><td></td><td></td><td></td><td></td><td></td><td></td><td></td><td></td><td></td></tr>
          </tbody>
        </table>
      </div>
      <div class="sheetbar d-flex align-items-center">
        <div class="nav-cell d-flex align-items-center justify-content-center"><svg width="9" height="13"><path d="M1 1v11" stroke="#666" stroke-width="1.500"/><path d="M8 1v11L2.500 6.500z" fill="#777"/></svg></div>
        <div class="nav-cell d-flex align-items-center justify-content-center"><svg width="7" height="13"><path d="M6 1v11L.5 6.500z" fill="#777"/></svg></div>
        <div class="nav-cell d-flex align-items-center justify-content-center"><svg width="7" height="13"><path d="M1 1v11l5.500-5.500z" fill="#777"/></svg></div>
        <div class="nav-cell d-flex align-items-center justify-content-center border-0"><svg width="9" height="13"><path d="M8 1v11" stroke="#666" stroke-width="1.500"/><path d="M1 1v11l5.500-5.500z" fill="#777"/></svg></div>
        <div class="sheet-tab on">Result list</div>
        <div class="sheet-tab">Info</div>
        <div class="sheet-tab">Walk Forward</div>
        <div class="hscroll ms-auto d-flex align-items-center justify-content-between h-100">
          <svg width="6" height="11"><path d="M5 0v11L0 5.500z" fill="#9a9a9a"/></svg>
          <svg width="6" height="11"><path d="M1 0v11l5-5.500z" fill="#9a9a9a"/></svg>
        </div>
      </div>
    </div>
  </div>
  <div class="side-right d-flex flex-column">
    <div class="rp-group rp-pad">
      <div class="rp-grip"></div>
      <div class="rp-i"><svg width="18" height="18"><use href="#l-arrow"/></svg></div>
      <div class="rp-i"><svg width="18" height="18"><use href="#l-seg"/></svg></div>
      <div class="rp-i"><svg width="18" height="18"><use href="#l-ray"/></svg></div>
      <div class="rp-i"><svg width="18" height="18"><use href="#l-ext"/></svg></div>
      <div class="rp-i"><svg width="18" height="18"><use href="#l-v"/></svg></div>
      <div class="rp-i"><svg width="18" height="18"><use href="#l-h"/></svg></div>
      <div class="rp-i"><svg width="18" height="18"><use href="#l-par"/></svg></div>
      <div class="rp-i"><svg width="18" height="18"><use href="#l-hatch"/></svg></div>
      <div class="rp-i"><svg width="18" height="18"><use href="#l-rect"/></svg></div>
      <div class="rp-i"><svg width="18" height="18"><use href="#l-ell"/></svg></div>
      <div class="rp-i abc-text">abc</div>
      <div class="rp-i"><svg width="18" height="18"><use href="#l-tri"/></svg></div>
      <div class="rp-i"><svg width="18" height="18"><use href="#l-fan"/></svg></div>
      <div class="rp-i"><svg width="18" height="18"><use href="#l-arc"/></svg></div>
      <div class="rp-i"><svg width="18" height="18"><use href="#l-cyc"/></svg></div>
      <div class="rp-i"><svg width="18" height="18"><use href="#l-zig"/></svg></div>
      <div class="rp-i"><svg width="18" height="18"><use href="#l-pin"/></svg></div>
    </div>
    <div class="rp-more"><i></i><b></b></div>
    <div class="rp-group">
      <div class="rp-grip"></div>
      <div class="rp-i"><svg width="18" height="18"><use href="#l-plus"/></svg></div>
      <div class="rp-i"><svg width="18" height="18"><use href="#l-minus"/></svg></div>
      <div class="rp-i">i</div><div class="rp-i">h</div><div class="rp-i">d</div><div class="rp-i">w</div><div class="rp-i">m</div>
    </div>
    <div class="rp-more"><i></i><b></b></div>
    <div class="rp-group rp-pad">
      <div class="rp-grip"></div>
      <div class="rp-i"><svg width="18" height="18"><use href="#g-hor"/></svg></div>
      <div class="rp-i"><svg width="18" height="18"><use href="#g-ver"/></svg></div>
      <div class="rp-i"><svg width="18" height="18"><use href="#g-ang"/></svg></div>
      <div class="rp-i"><svg width="18" height="18"><use href="#g-arcs"/></svg></div>
      <div class="rp-i"><svg width="18" height="18"><use href="#g-grid"/></svg></div>
      <div class="rp-i"><svg width="18" height="18"><use href="#g-fan"/></svg></div>
      <div class="rp-i"><svg width="18" height="18"><use href="#g-com"/></svg></div>
      <div class="rp-i"><svg width="18" height="18"><use href="#g-hh"/></svg></div>
    </div>
    <div class="rp-more"><i></i><b></b></div>
    <div class="rp-rest"></div>
  </div>
</div>

<div class="statusbar d-flex align-items-center">
  <span>For Help, press F1</span>
  <div class="ms-auto d-flex align-items-center gap-1">
    <span>X:</span><span class="st-sep"></span><span>Y:</span><span class="st-sep"></span>
    <span class="st-long">Ho Chi Minh Stock Exchange, Group 0, Services, Advertising</span><span class="st-sep"></span>
    <span>MyNewData</span><span class="st-sep"></span>
    <span class="st-ok">OK</span><span>2892M</span><span class="st-sep wide"></span><span class="me-1 cap-dim">CAP</span>
  </div>
</div>

<div class="taskbar d-flex align-items-center">
  <svg class="wx-ico" width="32" height="30" viewBox="0 0 32 30"><circle cx="15" cy="15" r="12" fill="#ee9620"/><ellipse cx="9" cy="8" rx="8" ry="4.500" fill="#bcd0e6"/><ellipse cx="22" cy="24" rx="9" ry="4.500" fill="#d5e2ef"/></svg>
  <div class="wx-box"><div class="weather-a">87°F</div><div class="weather-b">Partly sunny</div></div>
  <svg class="win-logo" width="30" height="30" viewBox="0 0 30 30"><rect x="0" y="0" width="14" height="14" rx="1" fill="#7fdcf8"/><rect x="16" y="0" width="14" height="14" rx="1" fill="#5ccaf6"/><rect x="0" y="16" width="14" height="14" rx="1" fill="#3ab6f5"/><rect x="16" y="16" width="14" height="14" rx="1" fill="#1f9df0"/></svg>
  <div class="searchpill d-flex align-items-center ps-3">
    <svg width="20" height="20"><circle cx="8.500" cy="8.500" r="6.500" fill="none" stroke="#e4e0dc" stroke-width="1.600"/><path d="M13 13l5 5" stroke="#e4e0dc" stroke-width="1.600"/></svg>
    <span class="search-txt">Search</span>
    <svg class="ms-auto me-2" width="26" height="30" viewBox="0 0 26 30"><path d="M13 1a12 12 0 0 1 0 24H3l-2 4V13A12 12 0 0 1 13 1z" fill="#fff"/><path d="M9 5v15l9-4-5-3" fill="none" stroke="#1582e0" stroke-width="3"/></svg>
  </div>
  <div class="applist d-flex align-items-center">
    <div class="tb-app"><svg width="30" height="34" viewBox="0 0 30 34"><path d="M15 1a14 14 0 0 1 0 28H4l-3 4V15A14 14 0 0 1 15 1z" fill="#7b70d8"/><rect x="8" y="11" width="10" height="9" rx="2" fill="#fff"/><path d="M19 14l4-3v9l-4-3z" fill="#fff"/></svg></div>
    <div class="tb-app active"><svg width="30" height="34"><use href="#ami"/></svg><span class="pip"></span></div>
    <div class="tb-app"><div class="zalo-disc d-flex align-items-center justify-content-center"><span class="zalo-txt">Zalo</span></div><span class="pip"></span></div>
    <div class="tb-app"><svg width="24" height="36" viewBox="0 0 24 36"><path d="M12 0q12 16 12 24a12 12 0 0 1-24 0Q0 16 12 0z" fill="url(#dr)"/></svg></div>
    <div class="tb-app"><svg width="32" height="30" viewBox="0 0 32 30"><path d="M0 2h12l3 4h17v24H0z" fill="#f5c21e"/><path d="M0 2h12l3 4H0z" fill="#e09b10"/><rect x="10" y="22" width="12" height="6" fill="#2b7fc4"/></svg></div>
    <div class="tb-app"><svg width="30" height="32" viewBox="0 0 30 32"><rect x="0" y="0" width="30" height="32" rx="7" fill="#fff"/><path d="M15 5l9 20H6z" fill="#16e01a"/><path d="M22 31l8-10v5l-4 5z" fill="#1a2f7a"/></svg></div>
    <div class="tb-app"><svg width="28" height="30" viewBox="0 0 28 30"><rect width="28" height="30" rx="2" fill="#d4d6c8"/><ellipse cx="14" cy="18" rx="10" ry="9" fill="#3f9a38"/><path d="M5 15q8 5 16-6-4 12-16 9z" fill="#dbe8c8"/></svg></div>
    <div class="tb-app"><svg width="30" height="30" viewBox="0 0 30 30"><circle cx="15" cy="15" r="15" fill="#db4437"/><path d="M15 15L2 22.500A15 15 0 0 0 15 30z" fill="#2da44e"/><path d="M15 15l0 15a15 15 0 0 0 13-22.500z" fill="#f4b400"/><circle cx="15" cy="15" r="7.500" fill="#fff"/><circle cx="15" cy="15" r="5.800" fill="#4285f4"/></svg><span class="pip"></span></div>
  </div>
  <div class="tray ms-auto d-flex align-items-center">
    <svg width="14" height="9"><path d="M1 8l6-6 6 6" fill="none" stroke="#eee" stroke-width="1.600"/></svg>
    <span class="eng">ENG</span>
    <svg class="t-wifi" width="20" height="16" viewBox="0 0 20 16"><path d="M1 5q9-7 18 0M4 8q6-5 12 0M7 11q3-2.500 6 0" fill="none" stroke="#eee" stroke-width="1.400"/><circle cx="10" cy="14" r="1.500" fill="#eee"/></svg>
    <svg class="t-vol" width="20" height="18" viewBox="0 0 20 18"><path d="M1 6h3l4-4v14l-4-4H1z" fill="none" stroke="#eee"/><path d="M11 6q2 3 0 6M14 4q3.500 5 0 10" fill="none" stroke="#eee" stroke-width="1.200"/></svg>
    <svg class="t-bat" width="22" height="18" viewBox="0 0 22 18"><rect x="2.500" y="4.500" width="16" height="10" rx="2" fill="none" stroke="#eee" stroke-width="1.300"/><rect x="4.500" y="6.500" width="7" height="6" fill="#eee"/><path d="M19 8h2v3h-2M7 0L4 7h3l-2 5" stroke="#eee" fill="none"/></svg>
    <div class="clock"><div>6:18 PM</div><div>8/26/2023</div></div>
    <div class="notif">3</div>
  </div>
</div>
</body>
</html>
